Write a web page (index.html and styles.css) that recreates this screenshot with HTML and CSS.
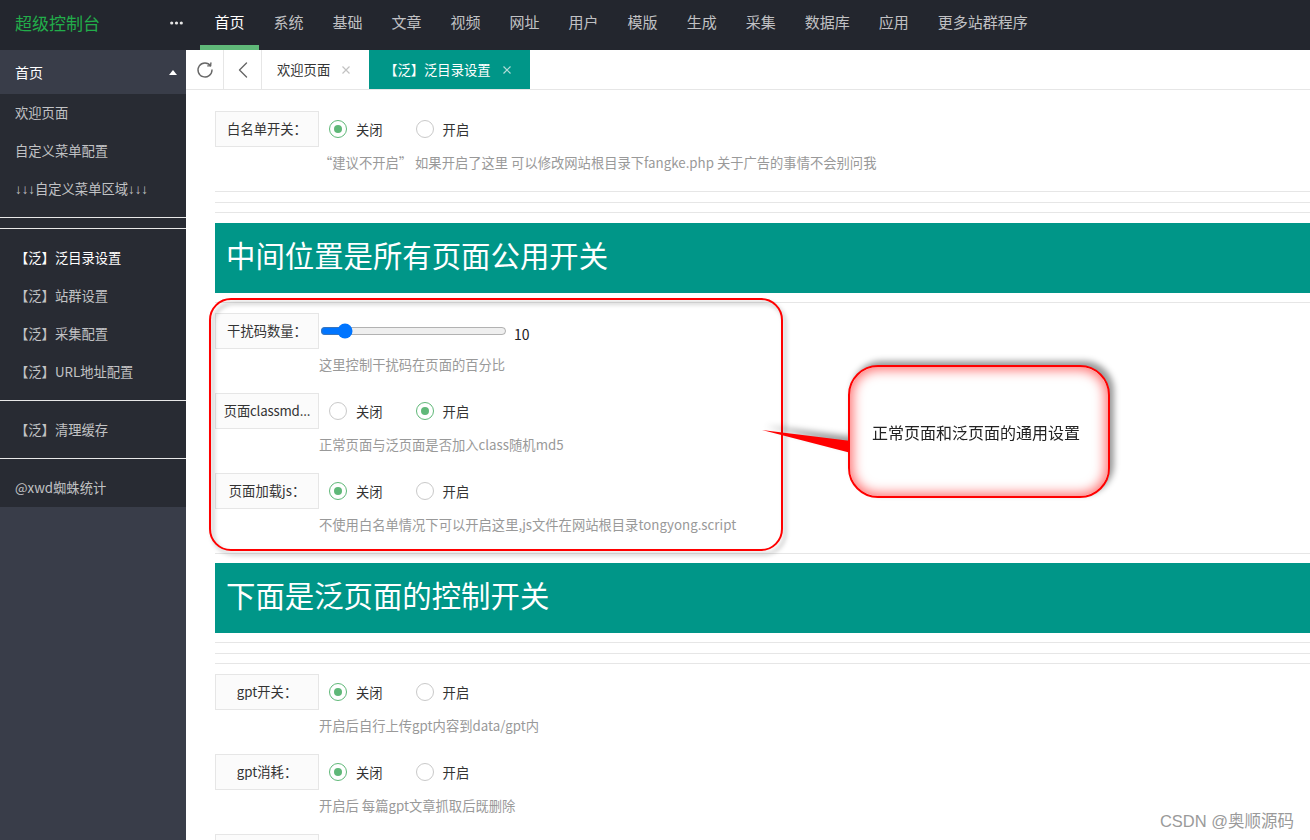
FILE: index.html
```html
<!DOCTYPE html>
<html lang="zh-CN">
<head>
<meta charset="utf-8">
<title>超级控制台</title>
<link rel="stylesheet" href="styles.css">
</head>
<body>
<header class="topbar">
  <div class="brand">
    <span class="logo">超级控制台</span>
    <svg class="more" width="13" height="4" viewBox="0 0 13 4"><circle cx="1.7" cy="2" r="1.6"/><circle cx="6.5" cy="2" r="1.6"/><circle cx="11.3" cy="2" r="1.6"/></svg>
  </div>
  <nav class="nav">
    <a class="active">首页</a><a>系统</a><a>基础</a><a>文章</a><a>视频</a><a>网址</a><a>用户</a><a>模版</a><a>生成</a><a>采集</a><a>数据库</a><a>应用</a><a>更多站群程序</a>
  </nav>
</header>
<div class="main">
  <aside class="side">
    <div class="side-head"><span>首页</span><span class="tri"></span></div>
    <div class="side-menu">
      <div class="side-item">欢迎页面</div>
      <div class="side-item">自定义菜单配置</div>
      <div class="side-item"><span class="arr">↓↓↓</span>自定义菜单区域<span class="arr">↓↓↓</span></div>
      <div class="side-sep"></div>
      <div class="side-sep"></div>
      <div class="side-item on">【泛】泛目录设置</div>
      <div class="side-item">【泛】站群设置</div>
      <div class="side-item">【泛】采集配置</div>
      <div class="side-item">【泛】URL地址配置</div>
      <div class="side-sep"></div>
      <div class="side-item">【泛】清理缓存</div>
      <div class="side-sep"></div>
      <div class="side-item">@xwd蜘蛛统计</div>
    </div>
  </aside>
  <section class="body">
    <div class="tabs">
      <div class="tab-tool">
        <svg width="18" height="18" viewBox="0 0 18 18" fill="none" stroke="#666" stroke-width="1.4" stroke-linecap="round" stroke-linejoin="round"><path d="M16 9 A7 7 0 1 1 14.6 4.8"/><path d="M11.8 4.9 L14.6 4.8 L14.9 2"/></svg>
      </div>
      <div class="tab-tool">
        <svg width="10" height="16" viewBox="0 0 10 16" fill="none" stroke="#666" stroke-width="1.4" stroke-linecap="round" stroke-linejoin="round"><path d="M8.5 1 L1.5 8 L8.5 15"/></svg>
      </div>
      <div class="tab">
        <span>欢迎页面</span>
        <svg class="close" width="8" height="8" viewBox="0 0 8 8" stroke="#c2c2c2" stroke-width="1.2"><path d="M0.5 0.5 L7.5 7.5 M7.5 0.5 L0.5 7.5"/></svg>
      </div>
      <div class="tab active">
        <span>【泛】泛目录设置</span>
        <svg class="close" width="8" height="8" viewBox="0 0 8 8" stroke="#b3dcd7" stroke-width="1.2"><path d="M0.5 0.5 L7.5 7.5 M7.5 0.5 L0.5 7.5"/></svg>
      </div>
    </div>
    <div class="content">
      <div class="item">
        <div class="line">
          <div class="label">白名单开关：</div>
          <div class="radios">
            <span class="radio on"><i></i>关闭</span>
            <span class="radio"><i></i>开启</span>
          </div>
        </div>
        <div class="help">“建议不开启” 如果开启了这里 可以修改网站根目录下fangke.php 关于广告的事情不会别问我</div>
      </div>
      <div class="hr"></div>
      <div class="hr m10"></div>
      <div class="hr m9"></div>
      <div class="banner m10">中间位置是所有页面公用开关</div>
      <div class="hr m9"></div>
      <div class="item m10">
        <div class="line">
          <div class="label">干扰码数量：</div>
          <input class="range" type="range" min="0" max="100" value="10">
          <span class="range-val">10</span>
        </div>
        <div class="help">这里控制干扰码在页面的百分比</div>
      </div>
      <div class="item">
        <div class="line">
          <div class="label tight">页面classmd...</div>
          <div class="radios">
            <span class="radio"><i></i>关闭</span>
            <span class="radio on"><i></i>开启</span>
          </div>
        </div>
        <div class="help">正常页面与泛页面是否加入class随机md5</div>
      </div>
      <div class="item">
        <div class="line">
          <div class="label">页面加载js：</div>
          <div class="radios">
            <span class="radio on"><i></i>关闭</span>
            <span class="radio"><i></i>开启</span>
          </div>
        </div>
        <div class="help">不使用白名单情况下可以开启这里,js文件在网站根目录tongyong.script</div>
      </div>
      <div class="hr"></div>
      <div class="banner m9">下面是泛页面的控制开关</div>
      <div class="hr m9"></div>
      <div class="hr m10"></div>
      <div class="hr m9"></div>
      <div class="item m10">
        <div class="line">
          <div class="label">gpt开关：</div>
          <div class="radios">
            <span class="radio on"><i></i>关闭</span>
            <span class="radio"><i></i>开启</span>
          </div>
        </div>
        <div class="help">开启后自行上传gpt内容到data/gpt内</div>
      </div>
      <div class="item">
        <div class="line">
          <div class="label">gpt消耗：</div>
          <div class="radios">
            <span class="radio on"><i></i>关闭</span>
            <span class="radio"><i></i>开启</span>
          </div>
        </div>
        <div class="help">开启后 每篇gpt文章抓取后既删除</div>
      </div>
      <div class="item">
        <div class="line">
          <div class="label"></div>
        </div>
      </div>
    </div>
  </section>
</div>

<div class="redbox"></div>
<div class="callout">
  <svg class="pointer" width="100" height="110" viewBox="0 0 100 110"><polygon points="7,75 96,86 96,98" fill="#ff0000"/></svg>
  <div class="bubble">正常页面和泛页面的通用设置</div>
</div>
<div class="watermark">CSDN @奥顺源码</div>
</body>
</html>
```

FILE: styles.css
```css
* {
  box-sizing: border-box;
  margin: 0;
  padding: 0;
}

html,
body {
  width: 1310px;
  height: 840px;
  overflow: hidden;
}

body {
  position: relative;
  font-family: "Noto Sans CJK SC", "Microsoft YaHei", sans-serif;
  font-size: 13.3px;
  color: #333;
  background: #fff;
}

/* ---------- top bar ---------- */
.topbar {
  display: flex;
  height: 50px;
  background: #23262e;
}

.brand {
  width: 200px;
  height: 45px;
  display: flex;
  align-items: center;
  justify-content: space-between;
  padding: 0 17px 0 15px;
}

.logo {
  font-size: 17px;
  line-height: 44px;
  color: #22ad4a;
}

.more {
  fill: #e6e6e6;
  margin-top: 1px;
}

.nav {
  display: flex;
}

.nav a {
  display: block;
  height: 50px;
  padding: 0 14.5px;
  line-height: 44px;
  font-size: 15px;
  color: rgba(255, 255, 255, 0.72);
  border-bottom: 5px solid transparent;
}

.nav a.active {
  color: #fff;
  border-bottom-color: #5fb878;
}

/* ---------- layout ---------- */
.main {
  display: flex;
  height: 790px;
}

.side {
  width: 186px;
  flex-shrink: 0;
  background: #393d49;
}

.side-head {
  height: 44px;
  display: flex;
  align-items: center;
  justify-content: space-between;
  padding: 0 9px 0 15px;
  font-size: 14px;
  color: #fff;
}

.tri {
  width: 0;
  height: 0;
  border-left: 4.5px solid transparent;
  border-right: 4.5px solid transparent;
  border-bottom: 5px solid #fff;
}

.side-menu {
  background: #282b33;
}

.side-item {
  height: 38px;
  line-height: 37px;
  padding-left: 15px;
  white-space: nowrap;
  color: rgba(255, 255, 255, 0.72);
}

.side-item.on {
  color: #fff;
}

.arr {
  font-family: "Liberation Sans", sans-serif;
  letter-spacing: 0;
}

.side-sep {
  height: 1px;
  background: #e8e8e8;
  margin: 9px 0 10px;
}

.body {
  flex: 1;
  min-width: 0;
  display: flex;
  flex-direction: column;
}

/* ---------- tabs ---------- */
.tabs {
  display: flex;
  height: 40px;
  flex-shrink: 0;
  border-bottom: 1px solid #e6e6e6;
}

.tab-tool {
  width: 38px;
  display: flex;
  align-items: center;
  justify-content: center;
  border-right: 1px solid #e6e6e6;
}

.tab {
  display: flex;
  align-items: center;
  gap: 12px;
  padding: 0 19px 0 15px;
  color: #333;
}

.tab.active {
  background: #009688;
  color: #fff;
}

/* ---------- content ---------- */
.content {
  padding: 21px 0 0 29px;
}

.item {
  height: 80px;
}

.line {
  display: flex;
  align-items: center;
  height: 36px;
}

.label {
  width: 104px;
  height: 36px;
  flex-shrink: 0;
  padding: 0 3px;
  line-height: 34px;
  text-align: center;
  white-space: nowrap;
  overflow: hidden;
  border: 1px solid #e6e6e6;
  background: #fbfbfb;
  color: #333;
}

.label.tight {
  padding: 0;
  letter-spacing: -0.2px;
}

.radios {
  display: flex;
  margin-left: 10px;
}

.radio {
  display: flex;
  align-items: center;
  margin-right: 33px;
  color: #333;
}

.radio i {
  width: 18px;
  height: 18px;
  margin-right: 9px;
  border: 1.5px solid #c9c9c9;
  border-radius: 50%;
  display: flex;
  align-items: center;
  justify-content: center;
}

.radio.on i {
  border-color: #5fb878;
}

.radio.on i::after {
  content: "";
  width: 8px;
  height: 8px;
  border-radius: 50%;
  background: #5fb878;
}

.range {
  width: 187px;
  height: 16px;
  margin: 0 0 0 1px;
}

.range-val {
  margin-left: 7px;
  padding-top: 6px;
  font-size: 14px;
  color: #222;
}

.help {
  margin: 6px 0 0 104px;
  line-height: 20px;
  white-space: nowrap;
  color: #999;
}

.hr {
  height: 1px;
  background: #e6e6e6;
}

.m9 {
  margin-top: 9px;
}

.m10 {
  margin-top: 10px;
}

.banner {
  height: 70px;
  padding-left: 11px;
  line-height: 62px;
  font-size: 29.4px;
  color: #fff;
  background: #009688;
  white-space: nowrap;
}

/* ---------- annotations ---------- */
.redbox {
  position: absolute;
  left: 209px;
  top: 298px;
  width: 574px;
  height: 253px;
  border: 2px solid #ff0000;
  border-radius: 22px;
  filter: drop-shadow(3px 4px 2px rgba(0, 0, 0, 0.3));
}

.callout {
  position: absolute;
  left: 755px;
  top: 355px;
  width: 370px;
  height: 160px;
  filter: drop-shadow(4px -4px 3px rgba(0, 0, 0, 0.4));
}

.pointer {
  position: absolute;
  left: 0;
  top: 0;
}

.bubble {
  position: absolute;
  left: 93px;
  top: 10px;
  width: 262px;
  height: 133px;
  display: flex;
  align-items: center;
  justify-content: center;
  padding-right: 6px;
  font-size: 16px;
  color: #222;
  background: #fff;
  border: 2px solid #ff0000;
  border-radius: 30px;
  box-shadow: inset 0 0 12px 3px rgba(255, 0, 0, 0.55);
}

.watermark {
  position: absolute;
  right: 16px;
  bottom: 11px;
  font-family: "Liberation Sans", "Noto Sans CJK SC", sans-serif;
  font-size: 16.5px;
  line-height: 16px;
  color: #9a9a9a;
  text-shadow: 0 0 2px #fff;
}
```
